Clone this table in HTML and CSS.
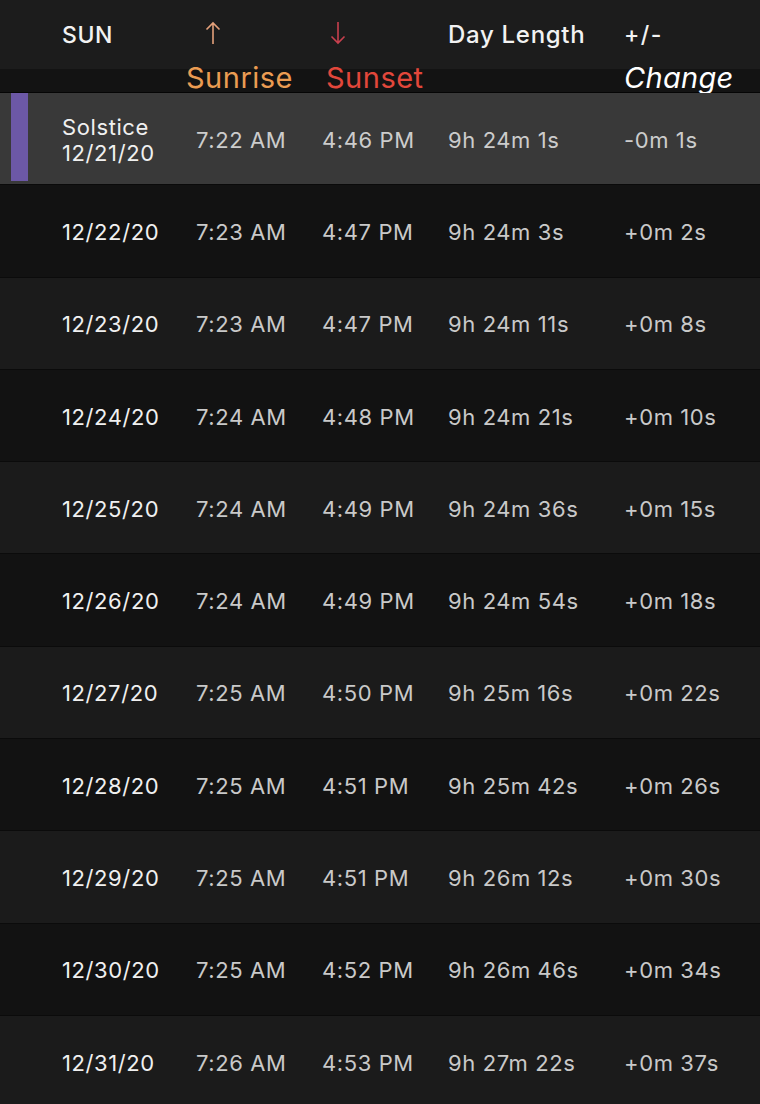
FILE: index.html
```html
<!DOCTYPE html>
<html>
<head>
<meta charset="utf-8">
<link rel="stylesheet" href="styles.css">
</head>
<body>
<div class="table">
  <div class="head">
    <div class="hrow">
      <div class="hcell c-date">SUN</div>
      <div class="hcell c-rise"><svg class="arrow" width="16" height="24" viewBox="0 0 16 24"><path d="M8 23V2M1.5 8.5L8 2l6.5 6.5" fill="none" stroke="#e3a07a" stroke-width="1.6"/></svg></div>
      <div class="hcell c-set"><svg class="arrow" width="16" height="24" viewBox="0 0 16 24"><path d="M8 1v21M1.5 15.5L8 22l6.5-6.5" fill="none" stroke="#c8404e" stroke-width="1.6"/></svg></div>
      <div class="hcell c-len">Day Length</div>
      <div class="hcell c-chg">+/-</div>
    </div>
    <div class="lrow">
      <div class="c-date"></div>
      <div class="c-rise lbl sunrise">Sunrise</div>
      <div class="c-set lbl sunset">Sunset</div>
      <div class="c-len"></div>
      <div class="c-chg lbl change">Change</div>
    </div>
  </div>
  <div class="row solstice">
    <div class="mark"></div>
    <div class="c-date date two">Solstice<br>12/21/20</div>
    <div class="c-rise val">7:22 AM</div>
    <div class="c-set val">4:46 PM</div>
    <div class="c-len val">9h 24m 1s</div>
    <div class="c-chg val">-0m 1s</div>
  </div>
  <div class="row dark"><div class="mark"></div><div class="c-date date">12/22/20</div><div class="c-rise val">7:23 AM</div><div class="c-set val">4:47 PM</div><div class="c-len val">9h 24m 3s</div><div class="c-chg val">+0m 2s</div></div>
  <div class="row light"><div class="mark"></div><div class="c-date date">12/23/20</div><div class="c-rise val">7:23 AM</div><div class="c-set val">4:47 PM</div><div class="c-len val">9h 24m 11s</div><div class="c-chg val">+0m 8s</div></div>
  <div class="row dark"><div class="mark"></div><div class="c-date date">12/24/20</div><div class="c-rise val">7:24 AM</div><div class="c-set val">4:48 PM</div><div class="c-len val">9h 24m 21s</div><div class="c-chg val">+0m 10s</div></div>
  <div class="row light"><div class="mark"></div><div class="c-date date">12/25/20</div><div class="c-rise val">7:24 AM</div><div class="c-set val">4:49 PM</div><div class="c-len val">9h 24m 36s</div><div class="c-chg val">+0m 15s</div></div>
  <div class="row dark"><div class="mark"></div><div class="c-date date">12/26/20</div><div class="c-rise val">7:24 AM</div><div class="c-set val">4:49 PM</div><div class="c-len val">9h 24m 54s</div><div class="c-chg val">+0m 18s</div></div>
  <div class="row light"><div class="mark"></div><div class="c-date date">12/27/20</div><div class="c-rise val">7:25 AM</div><div class="c-set val">4:50 PM</div><div class="c-len val">9h 25m 16s</div><div class="c-chg val">+0m 22s</div></div>
  <div class="row dark"><div class="mark"></div><div class="c-date date">12/28/20</div><div class="c-rise val">7:25 AM</div><div class="c-set val">4:51 PM</div><div class="c-len val">9h 25m 42s</div><div class="c-chg val">+0m 26s</div></div>
  <div class="row light"><div class="mark"></div><div class="c-date date">12/29/20</div><div class="c-rise val">7:25 AM</div><div class="c-set val">4:51 PM</div><div class="c-len val">9h 26m 12s</div><div class="c-chg val">+0m 30s</div></div>
  <div class="row dark"><div class="mark"></div><div class="c-date date">12/30/20</div><div class="c-rise val">7:25 AM</div><div class="c-set val">4:52 PM</div><div class="c-len val">9h 26m 46s</div><div class="c-chg val">+0m 34s</div></div>
  <div class="row light"><div class="mark"></div><div class="c-date date">12/31/20</div><div class="c-rise val">7:26 AM</div><div class="c-set val">4:53 PM</div><div class="c-len val">9h 27m 22s</div><div class="c-chg val">+0m 37s</div></div>
</div>
</body>
</html>
```

FILE: styles.css
```css
html, body {
  margin: 0;
  padding: 0;
  background: #1a1a1a;
}
body {
  width: 760px;
  height: 1104px;
  overflow: hidden;
  font-family: "Inter", "Roboto", "Liberation Sans", sans-serif;
}
.table {
  display: flex;
  flex-direction: column;
}
.head {
  background: linear-gradient(#1c1c1c 0, #1c1c1c 69px, #131313 69px, #131313 92px);
  border-bottom: 1px solid #050505;
  height: 92px;
}
.hrow, .lrow, .row {
  display: grid;
  grid-template-columns: 11px 17px 34px 124px 136px 126px 176px 1fr;
}
.hrow {
  height: 58px;
  align-items: end;
}
.hrow .c-date, .lrow .c-date, .row .c-date { grid-column: 4; }
.hrow .c-rise, .lrow .c-rise, .row .c-rise { grid-column: 5; }
.hrow .c-set, .lrow .c-set, .row .c-set { grid-column: 6; }
.hrow .c-len, .lrow .c-len, .row .c-len { grid-column: 7; }
.hrow .c-chg, .lrow .c-chg, .row .c-chg { grid-column: 8; }
.hcell {
  color: #f2f2f2;
  font-size: 23px;
  font-weight: 500;
  line-height: 28px;
  padding-bottom: 9px;
  letter-spacing: 0.6px;
}
.hcell.c-len { font-size: 24px; letter-spacing: 0.7px; }
.hcell.c-chg { letter-spacing: 1.5px; }
.arrow { display: block; }
.hrow .c-rise .arrow { margin-left: 19px; margin-bottom: 4px; }
.hrow .c-set .arrow { margin-left: 8px; margin-bottom: 4px; }
.lrow {
  height: 34px;
  align-items: center;
  padding-top: 3px;
}
.lbl {
  font-size: 29px;
  line-height: 34px;
  letter-spacing: 0.5px;
}
.sunrise { color: #eb9c52; }
.sunset { color: #e2473b; margin-left: 4px; }
.change { color: #ffffff; font-style: italic; letter-spacing: 0.3px; }
.row {
  height: 91.3px;
  border-bottom: 1px solid #0b0b0b;
  align-items: center;
}
.row.dark { background: #121212; }
.row.light { background: #1b1b1b; }
.row.solstice { background: #393939; border-bottom-color: #0a0a0a; }
.mark { grid-column: 2; align-self: stretch; }
.solstice .mark { background: #6c58a6; margin-bottom: 3px; }
.row .c-rise { padding-left: 10px; }
.date {
  color: #f0f0f0;
  font-size: 22px;
  line-height: 26px;
  letter-spacing: 0.6px;
  padding-top: 2px;
}
.val {
  color: #c9c9c9;
  font-size: 22px;
  line-height: 26px;
  letter-spacing: 0.6px;
  padding-top: 2px;
}
.solstice .val { color: #cccccc; }
```
